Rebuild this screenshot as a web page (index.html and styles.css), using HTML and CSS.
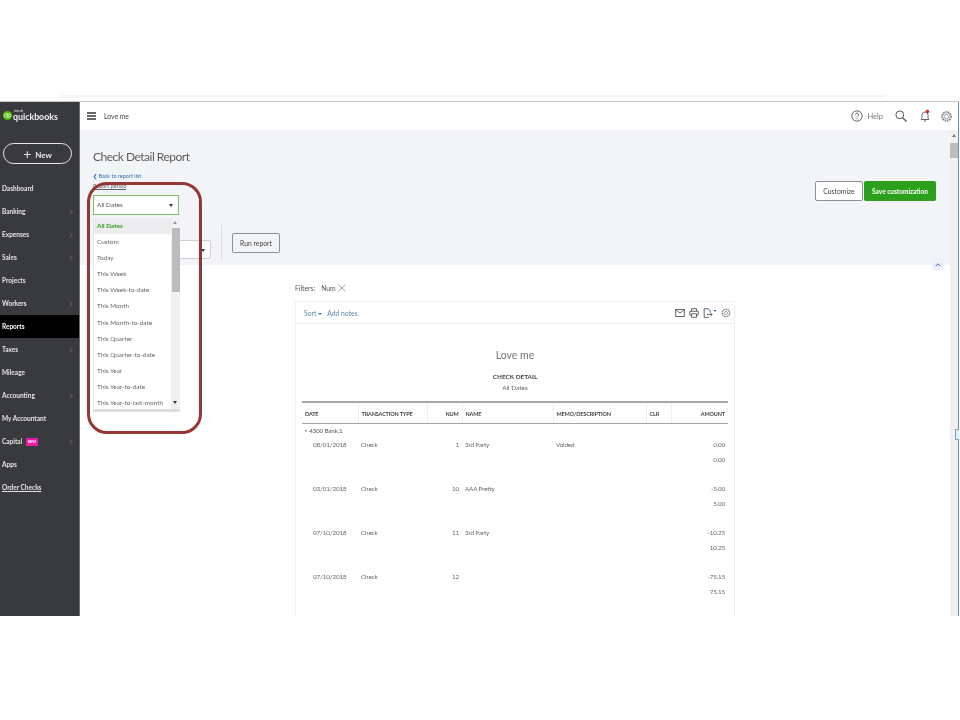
FILE: index.html
```html
<!DOCTYPE html>
<html lang="en">
<head>
<meta charset="UTF-8">
<meta name="viewport" content="width=device-width, initial-scale=1.0">
<title>Check Detail Report</title>
<link rel="stylesheet" href="styles.css">
</head>
<body>

<div class="top-band"></div>

<div class="app">
    <!-- Left navigation -->
    <nav class="sidebar">
        <div class="logo">
            <svg class="logo-mark" viewBox="0 0 10 10"><circle cx="5" cy="5" r="5" fill="#53b700"/><path d="M4.4 3.2H3.2a1.8 1.8 0 0 0 0 3.6h.5M5.6 6.8h1.2a1.8 1.8 0 0 0 0-3.6h-.5M4.4 2.4v5M5.6 2.6v5" fill="none" stroke="#fff" stroke-width=".8"/></svg>
            <div class="logo-text"><span class="logo-intuit">intuit</span><span class="logo-name">quickbooks</span></div>
        </div>
        <button class="new-btn" type="button"><span class="new-plus">+</span> New</button>
        <ul class="nav">
            <li>Dashboard</li>
            <li class="has-arrow">Banking</li>
            <li class="has-arrow">Expenses</li>
            <li class="has-arrow">Sales</li>
            <li>Projects</li>
            <li class="has-arrow">Workers</li>
            <li class="active">Reports</li>
            <li class="has-arrow">Taxes</li>
            <li>Mileage</li>
            <li class="has-arrow">Accounting</li>
            <li>My Accountant</li>
            <li class="has-arrow">Capital <span class="new-badge">NEW</span></li>
            <li>Apps</li>
            <li class="underlined">Order Checks</li>
        </ul>
    </nav>

    <div class="main">
        <!-- Top bar -->
        <header class="topbar">
            <div class="hamburger"><span></span><span></span><span></span></div>
            <span class="company">Love me</span>
            <div class="top-icons">
                <svg class="icon-help" viewBox="0 0 12 12"><circle cx="6" cy="6" r="5.2" fill="none" stroke="#555" stroke-width=".9"/><path d="M4.5 4.7a1.5 1.5 0 1 1 2.2 1.3c-.5.3-.7.5-.7 1.1M6 8.2v1" fill="none" stroke="#555" stroke-width=".9"/></svg>
                <span class="help-label">Help</span>
                <svg class="icon-search" viewBox="0 0 12 12"><circle cx="4.8" cy="4.8" r="3.9" fill="none" stroke="#555" stroke-width="1"/><path d="M7.6 7.6L11.5 11.5" stroke="#555" stroke-width="1.3"/></svg>
                <svg class="icon-bell" viewBox="0 0 12 14"><path d="M2.2 10.5c.8-1 .8-2 .8-4 0-2 1.2-3.5 3-3.5s3 1.500 3 3.500c0 2 0 3 .8 4z" fill="none" stroke="#555" stroke-width=".9"/><path d="M5 12h2" stroke="#555" stroke-width="1"/><circle cx="8.500" cy="2.500" r="1.800" fill="#d52b1e"/></svg>
                <svg class="icon-gear" viewBox="0 0 14 14"><circle cx="7" cy="7" r="2.200" fill="none" stroke="#777" stroke-width=".7"/><circle cx="7" cy="7" r="5" fill="none" stroke="#777" stroke-width="1.500" stroke-dasharray="1.800 .9"/><circle cx="7" cy="7" r="3.900" fill="none" stroke="#777" stroke-width=".5"/></svg>
            </div>
        </header>

        <div class="scroll-area">
            <div class="page">
                <!-- Report header panel -->
                <section class="panel">
                    <div class="panel-left">
                        <h1>Check Detail Report</h1>
                        <a class="back-link"><b>❮</b> Back to report list</a>
                        <div class="period-label">Report period</div>
                        <div class="select select-period"><span>All Dates</span><i class="caret"></i></div>
                        <div class="run-row">
                            <div class="select select-hidden"><i class="caret"></i></div>
                            <div class="divider"></div>
                            <button class="btn run-btn" type="button">Run report</button>
                        </div>
                    </div>
                    <div class="panel-actions">
                        <button class="btn customize-btn" type="button">Customize</button>
                        <button class="btn save-btn" type="button">Save customization</button>
                    </div>
                    <div class="collapse-btn"><svg viewBox="0 0 8 6"><path d="M1 5l3-3 3 3" fill="none" stroke="#2f6fb5" stroke-width="1.300"/></svg></div>
                </section>

                <!-- Report body -->
                <section class="report-wrap">
                    <div class="filters">Filters:<span class="filter-val">Num</span>
                        <svg class="filter-x" viewBox="0 0 8 8"><path d="M.5.5l7 7M7.500.5l-7 7" stroke="#666" stroke-width=".6"/></svg>
                    </div>
                    <div class="report-card">
                        <div class="report-tools">
                            <span class="tool-link">Sort <i class="sort-caret"></i></span>
                            <span class="tool-link">Add notes</span>
                            <div class="tool-icons">
                                <svg viewBox="0 0 10 10"><rect x=".7" y="1.500" width="8.600" height="7" fill="none" stroke="#555" stroke-width=".9"/><path d="M1 2l4 3 4-3" fill="none" stroke="#555" stroke-width=".9"/></svg>
                                <svg viewBox="0 0 10 10"><path d="M2.500 3V.7h5V3M2.500 7H.8V3.300h8.400V7H7.500M2.500 5.800h5v3.500h-5z" fill="none" stroke="#555" stroke-width=".9"/></svg>
                                <svg class="tool-wide" viewBox="0 0 14 10"><path d="M6 9.300H1.200V.7h4l2 2v2" fill="none" stroke="#555" stroke-width=".9"/><path d="M4 6.500h5M7.500 4.800L9.300 6.500 7.500 8.200" fill="none" stroke="#555" stroke-width=".9"/><path d="M10.500 2h3l-1.500 2z" fill="#2f6fb5"/></svg>
                                <svg viewBox="0 0 10 10"><circle cx="5" cy="5" r="1.600" fill="none" stroke="#777" stroke-width=".6"/><circle cx="5" cy="5" r="3.700" fill="none" stroke="#777" stroke-width="1.300" stroke-dasharray="1.100 .6"/></svg>
                            </div>
                        </div>
                        <div class="report-title">
                            <div class="report-company">Love me</div>
                            <div class="report-name">CHECK DETAIL</div>
                            <div class="report-dates">All Dates</div>
                        </div>
                        <table class="report-table">
                            <thead>
                                <tr>
                                    <th class="col-date">DATE</th>
                                    <th class="col-type">TRANSACTION TYPE</th>
                                    <th class="col-num num">NUM</th>
                                    <th class="col-name">NAME</th>
                                    <th class="col-memo">MEMO/DESCRIPTION</th>
                                    <th class="col-clr">CLR</th>
                                    <th class="col-amt num">AMOUNT</th>
                                </tr>
                            </thead>
                            <tbody>
                                <tr class="group-row"><td colspan="7"><i class="group-caret"></i>4300 Bank,1</td></tr>
                                <tr><td class="date">08/01/2018</td><td>Check</td><td class="num">1</td><td>3rd Party</td><td>Voided</td><td></td><td class="num">0.00</td></tr>
                                <tr><td colspan="6"></td><td class="num">0.00</td></tr>
                                <tr><td colspan="7"></td></tr>
                                <tr><td class="date">03/01/2018</td><td>Check</td><td class="num">10</td><td>AAA Pretty</td><td></td><td></td><td class="num">-5.00</td></tr>
                                <tr><td colspan="6"></td><td class="num">5.00</td></tr>
                                <tr><td colspan="7"></td></tr>
                                <tr><td class="date">07/10/2018</td><td>Check</td><td class="num">11</td><td>3rd Party</td><td></td><td></td><td class="num">-10.25</td></tr>
                                <tr><td colspan="6"></td><td class="num">10.25</td></tr>
                                <tr><td colspan="7"></td></tr>
                                <tr><td class="date">07/10/2018</td><td>Check</td><td class="num">12</td><td></td><td></td><td></td><td class="num">-75.15</td></tr>
                                <tr><td colspan="6"></td><td class="num">75.15</td></tr>
                                <tr><td colspan="7"></td></tr>
                            </tbody>
                        </table>
                    </div>
                </section>
            </div>
            <div class="scrollbar"><i class="scroll-up"></i><div class="scroll-thumb"></div></div>
        </div>
    </div>

    <!-- Open dropdown, lies over the panel -->
    <div class="dropdown">
        <ul class="dropdown-list">
            <li class="selected">All Dates</li>
            <li>Custom</li>
            <li>Today</li>
            <li>This Week</li>
            <li>This Week-to-date</li>
            <li>This Month</li>
            <li>This Month-to-date</li>
            <li>This Quarter</li>
            <li>This Quarter-to-date</li>
            <li>This Year</li>
            <li>This Year-to-date</li>
            <li>This Year-to-last-month</li>
        </ul>
        <div class="dropdown-scroll"><i class="dd-up"></i><div class="dd-thumb"></div><i class="dd-down"></i></div>
    </div>

    <!-- Red annotation around the dropdown -->
    <div class="annotation"></div>
    <div class="edge-handle"></div>
</div>

</body>
</html>
```

FILE: styles.css
```css
/* Basic reset */
* {
    box-sizing: border-box;
}

body {
    margin: 0;
    height: 720px;
    overflow: hidden;
    background-color: #fff;
    font-family: Lato, Arial, sans-serif;
    color: #555;
}

ul {
    list-style: none;
    margin: 0;
    padding: 0;
}

/* Faint strip above the app */
.top-band {
    height: 3px;
    width: 825px;
    margin: 95px 0 0 60px;
    background-color: #f6f6f6;
}

/* App frame */
.app {
    position: relative;
    display: flex;
    height: 515px;
    margin-top: 3px;
    margin-right: 1px;
    overflow: hidden;
    border-top: 1px solid #c4c4c4;
    filter: blur(0.35px);
    will-change: transform;
}

/* Sidebar */
.sidebar {
    flex: 0 0 80px;
    background-color: #393a3d;
    border-right: 1px solid #6b6c70;
    color: #e4e4e6;
}

.logo {
    display: flex;
    align-items: center;
    height: 26px;
    padding: 1px 0 0 3px;
}

.logo-mark {
    width: 9px;
    height: 9px;
    margin-right: 1px;
}

.logo-text {
    display: flex;
    flex-direction: column;
    line-height: 1;
}

.logo-intuit {
    font-size: 4px;
    height: 4px;
    margin-left: 1px;
}

.logo-name {
    font-size: 8.800px;
    font-weight: 700;
    color: #f2f2f2;
}

.new-btn {
    display: block;
    width: 69px;
    height: 21px;
    margin: 15px 0 13px 3px;
    padding: 0;
    background: none;
    border: 1.500px solid #e8e8e8;
    border-radius: 11px;
    color: #e8e8e8;
    font-family: inherit;
    font-size: 8px;
    font-weight: 700;
}

.new-plus {
    font-size: 14px;
    font-weight: 400;
    line-height: 1;
    vertical-align: -1px;
    margin-right: 2px;
}

.nav li {
    position: relative;
    height: 23px;
    line-height: 23px;
    padding-left: 2px;
    font-size: 6.500px;
    font-weight: 700;
}

.nav .has-arrow::after {
    content: "";
    position: absolute;
    right: 7px;
    top: 10px;
    width: 3px;
    height: 3px;
    border-top: 1px solid #5b5c60;
    border-right: 1px solid #5b5c60;
    transform: rotate(45deg);
}

.nav .active {
    background-color: #000;
    color: #fff;
}

.nav .underlined {
    text-decoration: underline;
}

.new-badge {
    display: inline-block;
    width: 12px;
    height: 8px;
    margin-left: 2px;
    background-color: #ec1ca4;
    color: #fff;
    font-size: 3.500px;
    line-height: 8px;
    text-align: center;
    vertical-align: 1px;
}

/* Main column */
.main {
    flex: 1;
    display: flex;
    flex-direction: column;
    min-width: 0;
    border-right: 1px solid #6f8fb0;
}

.topbar {
    display: flex;
    align-items: center;
    flex: 0 0 28px;
    padding: 0 5px 0 7px;
    background-color: #fff;
}

.hamburger span {
    display: block;
    width: 9px;
    height: 1.500px;
    margin: 1.500px 0;
    background-color: #666;
}

.company {
    margin-left: 8px;
    font-size: 6.800px;
    color: #444;
}

.top-icons {
    display: flex;
    align-items: center;
    margin-left: auto;
}

.icon-help {
    width: 12px;
    height: 12px;
    margin-right: 4px;
}

.help-label {
    font-size: 7.500px;
    color: #777;
    margin-right: 12px;
}

.icon-search {
    width: 12px;
    height: 12px;
    margin-right: 12px;
}

.icon-bell {
    width: 12px;
    height: 14px;
    margin-right: 9px;
}

.icon-gear {
    width: 13px;
    height: 13px;
}

.scroll-area {
    flex: 1;
    display: flex;
    min-height: 0;
}

.page {
    flex: 1;
    min-width: 0;
    background-color: #fff;
}

/* Right hand scrollbar */
.scrollbar {
    position: relative;
    flex: 0 0 8px;
    background-color: #f1f1f1;
}

.scroll-up {
    position: absolute;
    top: 4px;
    left: 2px;
    border: 2px solid transparent;
    border-top: 0;
    border-bottom: 3px solid #777;
}

.scroll-thumb {
    position: absolute;
    top: 13px;
    left: 0;
    width: 8px;
    height: 15px;
    background-color: #bdbdbd;
}

/* Header panel */
.panel {
    position: relative;
    display: flex;
    justify-content: space-between;
    height: 135px;
    padding: 18px 14px 0 13px;
    background-color: #f3f4f8;
}

h1 {
    margin: 0;
    font-size: 12px;
    font-weight: 400;
    letter-spacing: -0.5px;
    line-height: 17px;
    color: #5a5b5f;
}

.back-link {
    display: block;
    margin-top: 7px;
    height: 9px;
    font-size: 5.500px;
    line-height: 9px;
    color: #2f6fb5;
}

.back-link b {
    font-size: 5px;
}

.period-label {
    height: 9px;
    margin-top: 1px;
    font-size: 5.500px;
    line-height: 9px;
    color: #666;
    text-decoration: underline;
}

.select {
    position: relative;
    background-color: #fff;
    font-size: 6.500px;
    color: #555;
}

.select-period {
    width: 86px;
    height: 20px;
    margin-top: 4px;
    padding-left: 3px;
    border: 1px solid #7fbf6c;
    line-height: 18px;
}

.caret {
    position: absolute;
    right: 5px;
    top: 8px;
    border: 2px solid transparent;
    border-bottom: 0;
    border-top: 3px solid #333;
}

.run-row {
    display: flex;
    align-items: flex-start;
    margin-top: 10px;
}

.select-hidden {
    width: 118px;
    height: 19px;
    margin-top: 15px;
    border: 1px solid #cfcfd2;
    border-radius: 2px;
}

.divider {
    width: 1px;
    height: 35px;
    margin: 0 10px 0 10px;
    background-color: #dcdde0;
}

.btn {
    padding: 0;
    font-family: inherit;
    font-size: 6.800px;
    border-radius: 2px;
}

.run-btn {
    width: 48px;
    height: 20px;
    margin-top: 8px;
    background-color: #f3f4f8;
    border: 1px solid #8d9096;
    color: #444;
}

.panel-actions {
    display: flex;
    gap: 1px;
    margin-top: 33px;
    height: 20px;
}

.customize-btn {
    width: 48px;
    background-color: #fff;
    border: 1px solid #8d9096;
    color: #444;
}

.save-btn {
    width: 72px;
    background-color: #2ca01c;
    border: 0;
    color: #fff;
    font-weight: 700;
    font-size: 6.500px;
}

.collapse-btn {
    position: absolute;
    right: 7px;
    bottom: -5px;
    display: flex;
    align-items: center;
    justify-content: center;
    width: 11px;
    height: 11px;
    background-color: #eef1f7;
}

.collapse-btn svg {
    width: 6px;
    height: 5px;
}

/* Report area */
.report-wrap {
    padding: 17px 0 0 215px;
}

.filters {
    display: flex;
    align-items: center;
    height: 11px;
    font-size: 6.800px;
    color: #555;
}

.filter-val {
    margin-left: 6px;
    font-weight: 400;
}

.filter-x {
    width: 8px;
    height: 8px;
    margin-left: 2px;
}

.report-card {
    width: 440px;
    height: 340px;
    margin-top: 8px;
    padding: 0 6px;
    border: 1px solid #eef0f6;
    background-color: #fff;
}

.report-tools {
    display: flex;
    align-items: center;
    gap: 5px;
    height: 22px;
    margin: 0 -6px;
    padding: 0 3px 0 8px;
    border-bottom: 1px solid #eef0f6;
}

.tool-link {
    font-size: 6.800px;
    color: #5f86ad;
}

.sort-caret {
    display: inline-block;
    border: 2px solid transparent;
    border-bottom: 0;
    border-top: 2.500px solid #2f6fb5;
    vertical-align: 1px;
}

.tool-icons {
    display: flex;
    align-items: center;
    gap: 4px;
    margin-left: auto;
}

.tool-icons svg {
    width: 10px;
    height: 10px;
}

.tool-icons .tool-wide {
    width: 14px;
}

.report-title {
    height: 77px;
    padding-top: 23px;
    text-align: center;
}

.report-company {
    font-size: 10.500px;
    line-height: 16px;
    color: #777;
}

.report-name {
    margin-top: 9px;
    font-size: 6.400px;
    font-weight: 700;
    line-height: 9px;
    color: #444;
}

.report-dates {
    margin-top: 2px;
    font-size: 6.500px;
    line-height: 10px;
    color: #666;
}

/* Report table */
.report-table {
    width: 426px;
    table-layout: fixed;
    border-collapse: collapse;
    border-top: 2px solid #a8a8a8;
    font-size: 6.300px;
    letter-spacing: -0.15px;
}

.report-table th {
    height: 21px;
    padding: 3px 3px 0;
    border-bottom: 1px solid #a8a8a8;
    border-left: 1px solid #eeeeee;
    text-align: left;
    font-size: 5.500px;
    font-weight: 700;
    color: #444;
}

.report-table th:first-child {
    border-left: 0;
}

.report-table td {
    height: 14.670px;
    padding: 0 3px;
    color: #666;
    white-space: nowrap;
}

.report-table .num {
    text-align: right;
}

.col-date { width: 56px; }
.col-type { width: 69px; }
.col-num { width: 35px; }
.col-name { width: 91px; }
.col-memo { width: 93px; }
.col-clr { width: 25px; }
.col-amt { width: 57px; }

.report-table .date {
    padding-left: 11px;
}

.group-row td {
    padding-left: 3px;
    color: #555;
}

.group-caret {
    display: inline-block;
    margin-right: 2px;
    border: 1.500px solid transparent;
    border-bottom: 0;
    border-top: 2px solid #666;
    vertical-align: 1px;
}

/* Dropdown */
.dropdown {
    position: absolute;
    left: 93px;
    top: 116px;
    display: flex;
    width: 87px;
    height: 194px;
    overflow: hidden;
    background-color: #fff;
    border-bottom: 3px solid #dcdddf;
    border-left: 1px solid #e8e8e8;
}

.dropdown-list {
    flex: 1;
}

.dropdown-list li {
    height: 16.100px;
    padding-left: 3px;
    font-size: 6.400px;
    line-height: 16.100px;
    color: #666;
    white-space: nowrap;
}

.dropdown-list .selected {
    background-color: #ececef;
    color: #2ca01c;
    font-weight: 700;
}

.dropdown-scroll {
    position: relative;
    flex: 0 0 9px;
    background-color: #f0f0f0;
}

.dd-thumb {
    position: absolute;
    top: 10px;
    left: 1px;
    width: 8px;
    height: 64px;
    background-color: #bcbcbc;
}

.dd-up {
    position: absolute;
    top: 3px;
    left: 2px;
    border: 2px solid transparent;
    border-top: 0;
    border-bottom: 3px solid #999;
}

.dd-down {
    position: absolute;
    bottom: 5px;
    left: 2px;
    border: 2px solid transparent;
    border-bottom: 0;
    border-top: 3px solid #333;
}

/* Hand drawn marker round the dropdown */
.annotation {
    position: absolute;
    left: 87px;
    top: 80px;
    width: 115px;
    height: 252px;
    border: 3px solid #953735;
    border-radius: 20px;
}

/* Small tab on the right edge */
.edge-handle {
    position: absolute;
    right: 0;
    top: 327px;
    width: 4px;
    height: 11px;
    background-color: #d8f2fb;
    border: 1px solid #7f9fc0;
    border-right: 0;
}
```
